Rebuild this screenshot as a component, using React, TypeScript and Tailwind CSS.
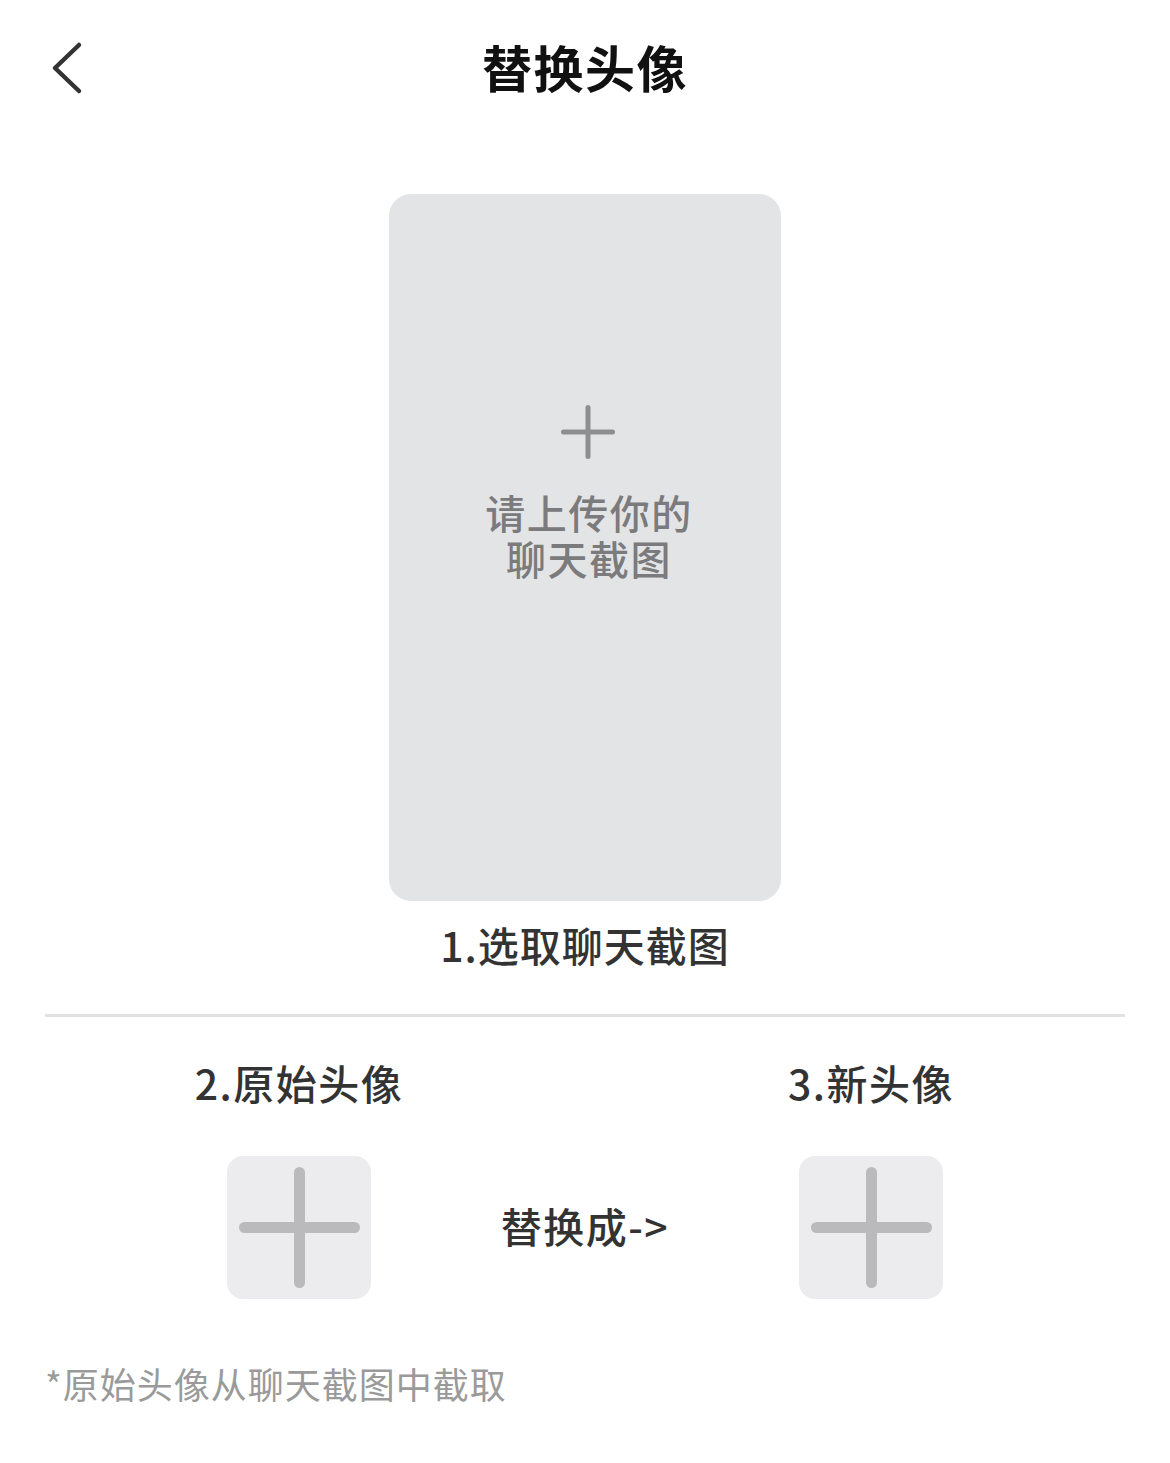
import React from 'react';

const font = { fontFamily: '"Noto Sans CJK SC", "Noto Sans", sans-serif' };

function PlusIcon({ size, stroke, color }: { size: number; stroke: number; color: string }) {
  return (
    <svg width={size} height={size} viewBox={`0 0 ${size} ${size}`} fill="none">
      <line x1={size / 2} y1={stroke / 2} x2={size / 2} y2={size - stroke / 2} stroke={color} strokeWidth={stroke} strokeLinecap="round" />
      <line x1={stroke / 2} y1={size / 2} x2={size - stroke / 2} y2={size / 2} stroke={color} strokeWidth={stroke} strokeLinecap="round" />
    </svg>
  );
}

function AvatarSlot() {
  return (
    <div className="w-[144px] h-[143px] rounded-[16px] bg-[#ececee] flex items-center justify-center">
      <PlusIcon size={121} stroke={11} color="#bababc" />
    </div>
  );
}

export default function App() {
  return (
    <div className="w-[1170px] min-h-[1463px] bg-white" style={font}>
      <header className="relative h-[132px] flex items-center justify-center">
        <button className="absolute left-[46px] top-[41px] w-[40px] h-[54px] flex items-center justify-center">
          <svg width="34" height="54" viewBox="0 0 34 54" fill="none">
            <polyline points="30,4 6,27 30,50" stroke="#333333" strokeWidth="4.5" strokeLinecap="round" strokeLinejoin="round" />
          </svg>
        </button>
        <h1 className="text-[50px] font-bold text-[#111111] leading-none tracking-[1.5px]">替换头像</h1>
      </header>

      <div className="flex flex-col items-center">
        <div className="mt-[62px] w-[392px] h-[707px] rounded-[22px] bg-[#e3e4e6] flex flex-col items-center pt-[211px]">
          <div className="ml-[6px]">
            <PlusIcon size={54} stroke={5} color="#8e8e90" />
          </div>
          <div className="mt-[30px] ml-[8px] text-[40px] leading-[46px] text-[#7b7b7d] text-center font-medium tracking-[1.5px]">
            <p>请上传你的</p>
            <p>聊天截图</p>
          </div>
        </div>
        <p className="mt-[15px] text-[41px] leading-[56px] font-medium text-[#333333] tracking-[1px]">1.选取聊天截图</p>
      </div>

      <div className="mx-[45px] mt-[42px] h-[3px] bg-[#e2e2e2]" />

      <div className="flex justify-center mt-[37px]">
        <div className="w-[240px] flex flex-col items-center">
          <p className="text-[41px] leading-[56px] font-medium text-[#333333] tracking-[1.5px]">2.原始头像</p>
          <div className="mt-[46px]">
            <AvatarSlot />
          </div>
        </div>
        <div className="w-[332px] flex items-end justify-center pb-[46px]">
          <p className="text-[41px] leading-[56px] font-medium text-[#333333] tracking-[1.5px]">替换成-&gt;</p>
        </div>
        <div className="w-[240px] flex flex-col items-center">
          <p className="text-[41px] leading-[56px] font-medium text-[#333333] tracking-[1.5px]">3.新头像</p>
          <div className="mt-[46px]">
            <AvatarSlot />
          </div>
        </div>
      </div>

      <p className="mt-[60px] px-[45px] text-[36px] leading-[48px] text-[#9a9a9a] tracking-[1px]">*原始头像从聊天截图中截取</p>
    </div>
  );
}
